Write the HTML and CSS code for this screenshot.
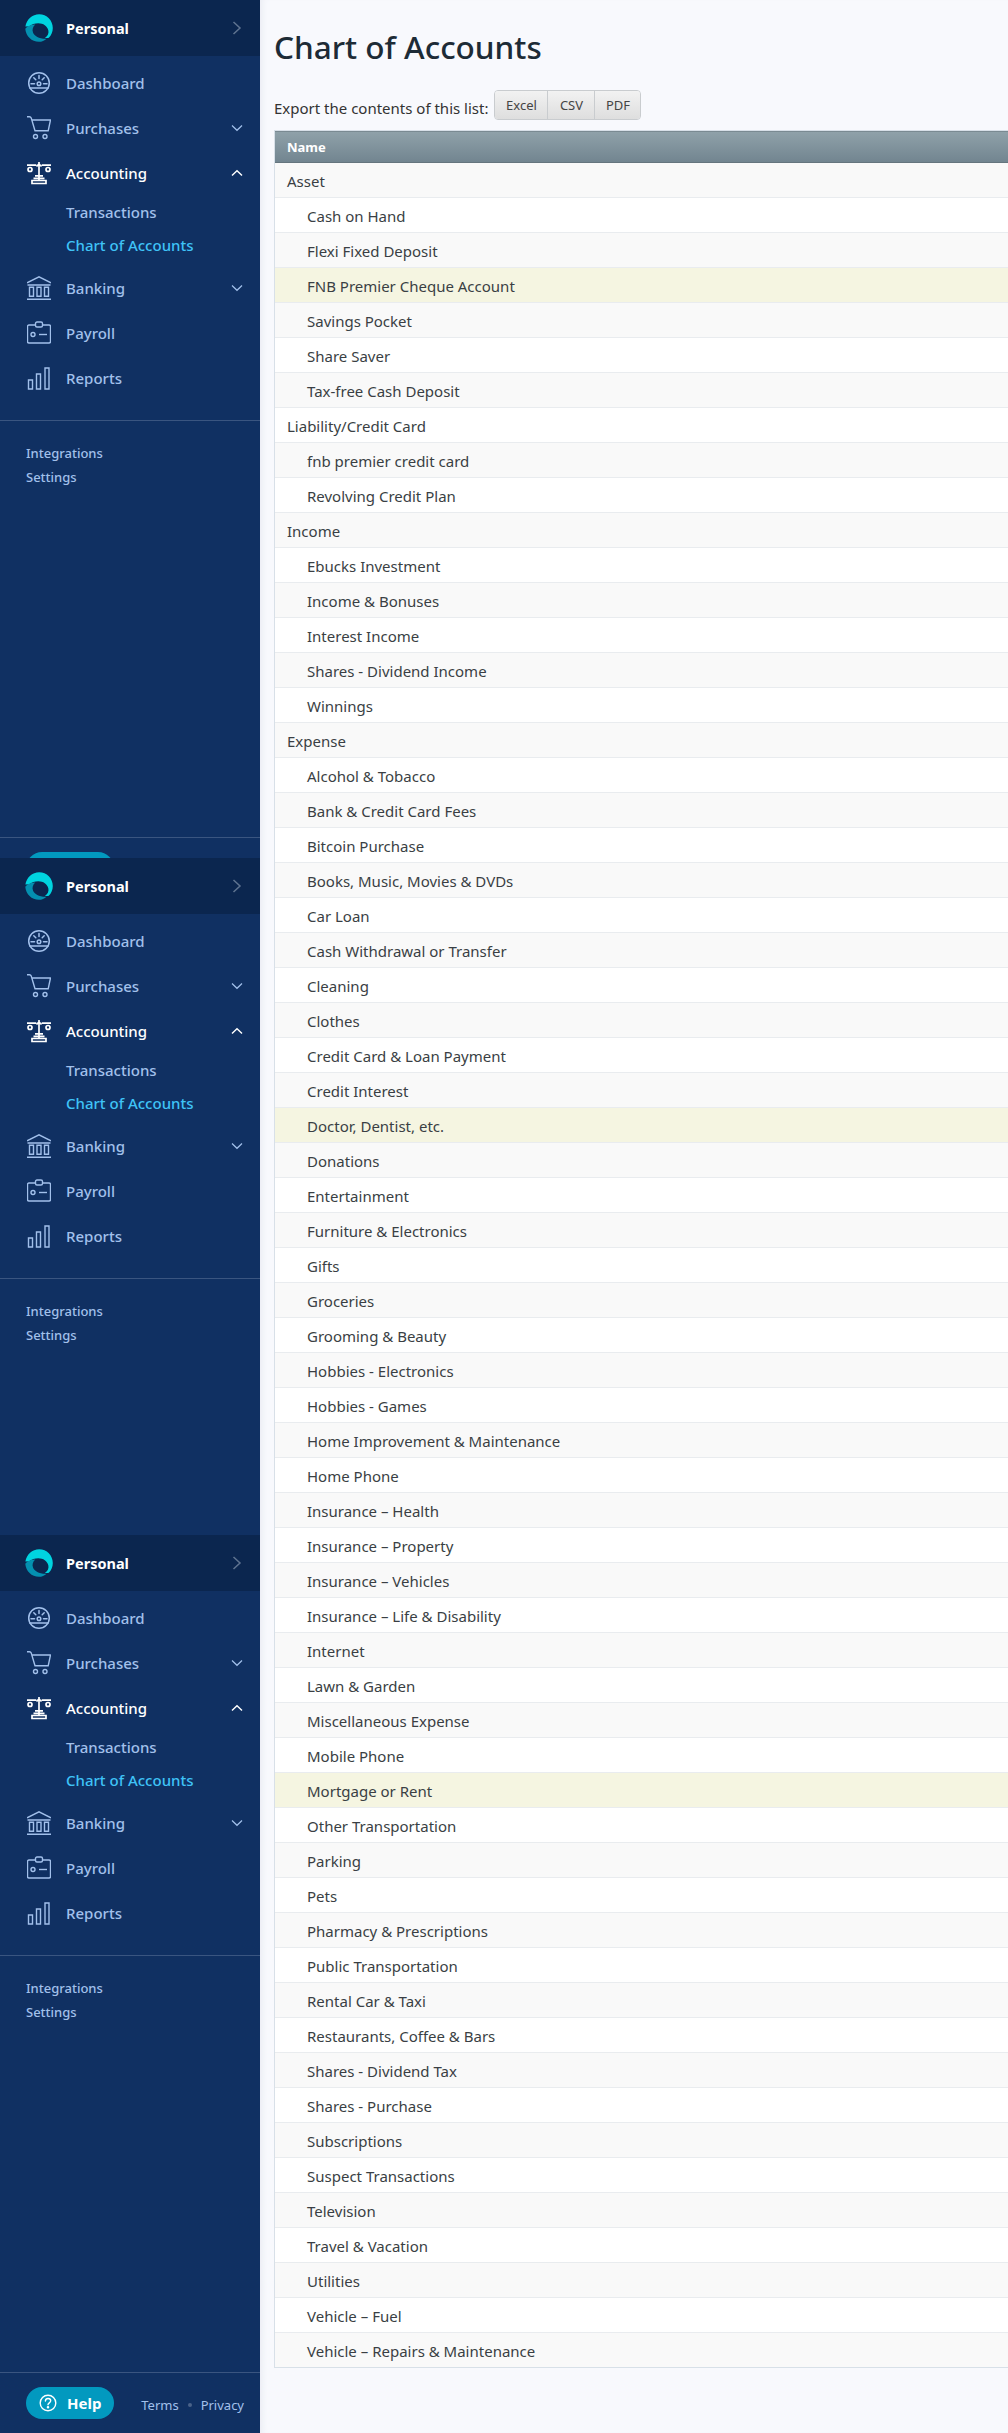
FILE: index.html
```html
<!DOCTYPE html>
<html lang="en">
<head>
<meta charset="utf-8">
<title>Chart of Accounts</title>
<link rel="stylesheet" href="styles.css">
</head>
<body>
<svg class="defs" width="0" height="0" aria-hidden="true">
  <symbol id="i-logo" viewBox="0 0 28 28">
    <path fill="#00d4e0" d="M.4 12.500C1.500 5.500 7.200.2 14.200.2 21.800.2 27.800 6.400 27.800 14c0 3.800-1.400 7.200-4 9.800-1.200.3-2.600.3-3.800-.1 2.900-1.800 4-4.700 3.300-7.500-1-4.200-5-7-10-7-3.500 0-6.800.9-8.900 3z"/>
    <path fill="#0490b0" d="M.3 15C.5 13.800 3.800 10.300 10.300 10.400c-2.600 2.300-3.400 5.400-2.200 8.300 1.500 3.500 6.200 6.300 13.500 6-2.100 1.900-4.800 3.100-7.700 3.100C6.700 27.800.9 22.200.3 15z"/>
  </symbol>
  <symbol id="i-gauge" viewBox="0 0 24 24" fill="none" stroke="currentColor" stroke-width="1.500">
    <circle cx="12" cy="12" r="10.300"/>
    <circle cx="12" cy="12.800" r="1.800"/>
    <path d="M12 4.500v3M6.800 6.800l2 2M17.200 6.800l-2 2M4 12.800h3.500M16.500 12.800H20M2.800 17h18.400" stroke-linecap="round"/>
  </symbol>
  <symbol id="i-cart" viewBox="0 0 24 24" fill="none" stroke="currentColor" stroke-width="1.400">
    <path d="M0 .7h2.500c.8 0 1.400.4 1.700 1.200L8 14.800h13.200L23.500 4H4.800" stroke-linejoin="round"/>
    <circle cx="8.500" cy="20.500" r="2"/>
    <circle cx="18" cy="20.500" r="2"/>
  </symbol>
  <symbol id="i-scale" viewBox="0 0 24 24" fill="none" stroke="currentColor" stroke-width="1.700">
    <path d="M0 4.200h9.300M14.700 4.200H24M12 1v18M9.500 5.500 12 3l2.500 2.500" />
    <circle cx="3" cy="8.500" r="2"/>
    <circle cx="21" cy="8.500" r="2"/>
    <path d="M8 14.800h8M6.500 17.300h11M5 22.500h14v-3H5z"/>
  </symbol>
  <symbol id="i-bank" viewBox="0 0 24 24" fill="none" stroke="currentColor" stroke-width="1.400">
    <path d="M0 6.800 12 .8l12 6M.5 9h23M0 23.200h24"/>
    <path d="M2.500 11.300h4v9h-4zM10 11.300h4v9h-4zM17.500 11.300h4v9h-4z"/>
  </symbol>
  <symbol id="i-card" viewBox="0 0 24 24" fill="none" stroke="currentColor" stroke-width="1.400">
    <path d="M8.500 4H2C1 4 .5 4.500.5 5.500v15C.5 21.500 1 22 2 22h20c1 0 1.500-.5 1.500-1.500v-15C23.500 4.500 23 4 22 4h-6.500"/>
    <rect x="8.500" y="1" width="7" height="5" rx="1.500"/>
    <circle cx="6" cy="13.500" r="2"/>
    <path d="M12 13.500h8"/>
  </symbol>
  <symbol id="i-bars" viewBox="0 0 24 24" fill="none" stroke="currentColor" stroke-width="1.400">
    <path d="M1.500 14h4v9h-4zM9.500 8h4v15h-4zM18 2h4v21h-4z"/>
  </symbol>
  <symbol id="i-help" viewBox="0 0 18 18" fill="none" stroke="currentColor" stroke-width="1.400">
    <circle cx="9" cy="9" r="7.800"/>
    <path d="M6.400 7c.1-1.600 1.300-2.500 2.700-2.500 1.500 0 2.600 1 2.600 2.300 0 2-2.700 2.100-2.700 4" stroke-linecap="round"/>
    <circle cx="9" cy="13.300" r=".6" fill="currentColor"/>
  </symbol>
  <symbol id="i-right" viewBox="0 0 10 14" fill="none" stroke="currentColor" stroke-width="1.500">
    <path d="M1.500 1 8 7l-6.500 6"/>
  </symbol>
  <symbol id="i-down" viewBox="0 0 12 8" fill="none" stroke="currentColor" stroke-width="1.200">
    <path d="M1 1.500 6 6.300l5-4.800"/>
  </symbol>
  <symbol id="i-up" viewBox="0 0 12 8" fill="none" stroke="currentColor" stroke-width="1.400">
    <path d="M1 6.500 6 1.700l5 4.800"/>
  </symbol>
</svg>

<div class="app">
  <aside class="sidebar">
    <div class="panel panel-first">
      <div class="panel-inner">
        <a class="account"><svg class="logo"><use href="#i-logo"/></svg><span class="account-name">Personal</span><svg class="account-arrow"><use href="#i-right"/></svg></a>
        <nav class="nav">
          <a class="nav-item"><svg class="nav-icon"><use href="#i-gauge"/></svg>Dashboard</a>
          <a class="nav-item"><svg class="nav-icon"><use href="#i-cart"/></svg>Purchases<svg class="caret"><use href="#i-down"/></svg></a>
          <a class="nav-item nav-open"><svg class="nav-icon"><use href="#i-scale"/></svg>Accounting<svg class="caret"><use href="#i-up"/></svg></a>
          <div class="subnav"><a class="sub-item">Transactions</a><a class="sub-item sub-active">Chart of Accounts</a></div>
          <a class="nav-item"><svg class="nav-icon"><use href="#i-bank"/></svg>Banking<svg class="caret"><use href="#i-down"/></svg></a>
          <a class="nav-item"><svg class="nav-icon"><use href="#i-card"/></svg>Payroll</a>
          <a class="nav-item"><svg class="nav-icon"><use href="#i-bars"/></svg>Reports</a>
        </nav>
        <div class="extras"><a class="extra">Integrations</a><a class="extra">Settings</a></div>
        <div class="foot"><span class="help"></span></div>
      </div>
    </div>
    <div class="panel panel-second">
      <div class="panel-inner">
        <a class="account"><svg class="logo"><use href="#i-logo"/></svg><span class="account-name">Personal</span><svg class="account-arrow"><use href="#i-right"/></svg></a>
        <nav class="nav">
          <a class="nav-item"><svg class="nav-icon"><use href="#i-gauge"/></svg>Dashboard</a>
          <a class="nav-item"><svg class="nav-icon"><use href="#i-cart"/></svg>Purchases<svg class="caret"><use href="#i-down"/></svg></a>
          <a class="nav-item nav-open"><svg class="nav-icon"><use href="#i-scale"/></svg>Accounting<svg class="caret"><use href="#i-up"/></svg></a>
          <div class="subnav"><a class="sub-item">Transactions</a><a class="sub-item sub-active">Chart of Accounts</a></div>
          <a class="nav-item"><svg class="nav-icon"><use href="#i-bank"/></svg>Banking<svg class="caret"><use href="#i-down"/></svg></a>
          <a class="nav-item"><svg class="nav-icon"><use href="#i-card"/></svg>Payroll</a>
          <a class="nav-item"><svg class="nav-icon"><use href="#i-bars"/></svg>Reports</a>
        </nav>
        <div class="extras"><a class="extra">Integrations</a><a class="extra">Settings</a></div>
      </div>
    </div>
    <div class="panel panel-third">
      <div class="panel-inner">
        <a class="account"><svg class="logo"><use href="#i-logo"/></svg><span class="account-name">Personal</span><svg class="account-arrow"><use href="#i-right"/></svg></a>
        <nav class="nav">
          <a class="nav-item"><svg class="nav-icon"><use href="#i-gauge"/></svg>Dashboard</a>
          <a class="nav-item"><svg class="nav-icon"><use href="#i-cart"/></svg>Purchases<svg class="caret"><use href="#i-down"/></svg></a>
          <a class="nav-item nav-open"><svg class="nav-icon"><use href="#i-scale"/></svg>Accounting<svg class="caret"><use href="#i-up"/></svg></a>
          <div class="subnav"><a class="sub-item">Transactions</a><a class="sub-item sub-active">Chart of Accounts</a></div>
          <a class="nav-item"><svg class="nav-icon"><use href="#i-bank"/></svg>Banking<svg class="caret"><use href="#i-down"/></svg></a>
          <a class="nav-item"><svg class="nav-icon"><use href="#i-card"/></svg>Payroll</a>
          <a class="nav-item"><svg class="nav-icon"><use href="#i-bars"/></svg>Reports</a>
        </nav>
        <div class="extras"><a class="extra">Integrations</a><a class="extra">Settings</a></div>
        <div class="foot"><a class="help"><svg class="help-icon"><use href="#i-help"/></svg>Help</a><div class="legal"><a>Terms</a><i class="dot"></i><a>Privacy</a></div></div>
      </div>
    </div>
  </aside>

  <main class="main">
    <h1 class="title">Chart of Accounts</h1>
    <div class="export">
      <span class="export-label">Export the contents of this list:</span>
      <div class="btn-group"><button class="btn">Excel</button><button class="btn">CSV</button><button class="btn">PDF</button></div>
    </div>
    <table class="accounts">
      <thead><tr><th>Name</th></tr></thead>
      <tbody>
        <tr><td>Asset</td></tr>
        <tr><td class="child">Cash on Hand</td></tr>
        <tr><td class="child">Flexi Fixed Deposit</td></tr>
        <tr class="mark"><td class="child">FNB Premier Cheque Account</td></tr>
        <tr><td class="child">Savings Pocket</td></tr>
        <tr><td class="child">Share Saver</td></tr>
        <tr><td class="child">Tax-free Cash Deposit</td></tr>
        <tr><td>Liability/Credit Card</td></tr>
        <tr><td class="child">fnb premier credit card</td></tr>
        <tr><td class="child">Revolving Credit Plan</td></tr>
        <tr><td>Income</td></tr>
        <tr><td class="child">Ebucks Investment</td></tr>
        <tr><td class="child">Income &amp; Bonuses</td></tr>
        <tr><td class="child">Interest Income</td></tr>
        <tr><td class="child">Shares - Dividend Income</td></tr>
        <tr><td class="child">Winnings</td></tr>
        <tr><td>Expense</td></tr>
        <tr><td class="child">Alcohol &amp; Tobacco</td></tr>
        <tr><td class="child">Bank &amp; Credit Card Fees</td></tr>
        <tr><td class="child">Bitcoin Purchase</td></tr>
        <tr><td class="child">Books, Music, Movies &amp; DVDs</td></tr>
        <tr><td class="child">Car Loan</td></tr>
        <tr><td class="child">Cash Withdrawal or Transfer</td></tr>
        <tr><td class="child">Cleaning</td></tr>
        <tr><td class="child">Clothes</td></tr>
        <tr><td class="child">Credit Card &amp; Loan Payment</td></tr>
        <tr><td class="child">Credit Interest</td></tr>
        <tr class="mark"><td class="child">Doctor, Dentist, etc.</td></tr>
        <tr><td class="child">Donations</td></tr>
        <tr><td class="child">Entertainment</td></tr>
        <tr><td class="child">Furniture &amp; Electronics</td></tr>
        <tr><td class="child">Gifts</td></tr>
        <tr><td class="child">Groceries</td></tr>
        <tr><td class="child">Grooming &amp; Beauty</td></tr>
        <tr><td class="child">Hobbies - Electronics</td></tr>
        <tr><td class="child">Hobbies - Games</td></tr>
        <tr><td class="child">Home Improvement &amp; Maintenance</td></tr>
        <tr><td class="child">Home Phone</td></tr>
        <tr><td class="child">Insurance – Health</td></tr>
        <tr><td class="child">Insurance – Property</td></tr>
        <tr><td class="child">Insurance – Vehicles</td></tr>
        <tr><td class="child">Insurance – Life &amp; Disability</td></tr>
        <tr><td class="child">Internet</td></tr>
        <tr><td class="child">Lawn &amp; Garden</td></tr>
        <tr><td class="child">Miscellaneous Expense</td></tr>
        <tr><td class="child">Mobile Phone</td></tr>
        <tr class="mark"><td class="child">Mortgage or Rent</td></tr>
        <tr><td class="child">Other Transportation</td></tr>
        <tr><td class="child">Parking</td></tr>
        <tr><td class="child">Pets</td></tr>
        <tr><td class="child">Pharmacy &amp; Prescriptions</td></tr>
        <tr><td class="child">Public Transportation</td></tr>
        <tr><td class="child">Rental Car &amp; Taxi</td></tr>
        <tr><td class="child">Restaurants, Coffee &amp; Bars</td></tr>
        <tr><td class="child">Shares - Dividend Tax</td></tr>
        <tr><td class="child">Shares - Purchase</td></tr>
        <tr><td class="child">Subscriptions</td></tr>
        <tr><td class="child">Suspect Transactions</td></tr>
        <tr><td class="child">Television</td></tr>
        <tr><td class="child">Travel &amp; Vacation</td></tr>
        <tr><td class="child">Utilities</td></tr>
        <tr><td class="child">Vehicle – Fuel</td></tr>
        <tr><td class="child">Vehicle – Repairs &amp; Maintenance</td></tr>
      </tbody>
    </table>
  </main>
</div>
</body>
</html>
```
FILE: styles.css
```css
* { box-sizing: border-box; }
html, body { margin: 0; height: 2433px; overflow: hidden; }
body { font-family: "Noto Sans", "Open Sans", sans-serif; background: #f8f9fd; color: #333; }
a { text-decoration: none; color: inherit; }
.defs { display: block; height: 0; }

.app { display: flex; height: 2433px; width: 1008px; overflow: hidden; }

.sidebar { width: 260px; flex: none; background: #103062; display: flex; flex-direction: column; }
.panel { overflow: hidden; flex: none; }
.panel-first { height: 858px; }
.panel-second { height: 677px; }
.panel-third { height: 898px; }
.panel-inner { height: 898px; display: flex; flex-direction: column; }

.account { height: 56px; flex: none; display: flex; align-items: center; background: #0b264f; padding-left: 25px; }
.logo { width: 28px; height: 28px; flex: none; }
.account-name { margin-left: 13px; font-size: 14.500px; font-weight: 700; color: #fff; flex: 1; }
.account-arrow { width: 10px; height: 14px; margin-right: 18px; color: #5f7390; }

.nav { padding-top: 4px; display: flex; flex-direction: column; }
.nav-item { height: 45px; display: flex; align-items: center; padding-left: 27px; padding-right: 17px; font-size: 15px; font-weight: 500; color: #a2c0eb; }
.nav-open { color: #fff; }
.nav-icon { width: 24px; height: 24px; margin-right: 15px; flex: none; }
.caret { width: 12px; height: 8px; margin-left: auto; }
.subnav { display: flex; flex-direction: column; margin-bottom: 4px; }
.sub-item { height: 33px; display: flex; align-items: center; padding-left: 66px; font-size: 15px; font-weight: 500; color: #a2c0eb; }
.sub-active { color: #3fc3f7; }

.extras { margin-top: 20px; border-top: 1px solid #3a5580; padding: 20px 0 0 26px; display: flex; flex-direction: column; }
.extra { height: 24px; display: flex; align-items: center; font-size: 13px; font-weight: 500; color: #a2c0eb; }

.foot { margin-top: auto; border-top: 1px solid #3a5580; height: 61px; display: flex; align-items: flex-start; padding: 14px 16px 0 26px; justify-content: space-between; }
.help { width: 88px; height: 32px; border-radius: 16px; background: #0299bf; color: #fff; display: flex; align-items: center; font-size: 15px; font-weight: 700; padding-left: 13px; }
.help-icon { width: 18px; height: 18px; margin-right: 10px; }
.legal { display: flex; align-items: center; height: 36px; font-size: 13px; color: #a2c0eb; }
.dot { width: 4px; height: 4px; border-radius: 50%; background: #4a6288; margin: 0 9px; }

.main { flex: 1; min-width: 0; padding: 0 0 0 14px; background: #f8f9fd; box-shadow: inset 6px 0 6px -4px #e9ebf2; overflow: hidden; }
.title { margin: 26px 0 0; font-size: 31.500px; line-height: 42px; font-weight: 500; color: #1d2b36; }
.export { margin-top: 22px; height: 30px; display: flex; align-items: flex-start; font-size: 15px; color: #333; }
.export-label { margin-right: 6px; margin-top: 8px; line-height: 20px; }
.btn-group { display: flex; border: 1px solid #c9cccf; border-radius: 4px; overflow: hidden; height: 30px; }
.btn { font: inherit; font-size: 13px; padding: 0; height: 28px; border: 0; border-right: 1px solid #c9cccf; color: #444; background: linear-gradient(#f2f2f2, #dedede); display: flex; align-items: center; justify-content: center; width: 53px; }
.btn:nth-child(2) { width: 47px; }
.btn:last-child { border-right: 0; width: 45px; }

.accounts { width: 1000px; border-collapse: separate; border-spacing: 0; margin-top: 10px; border: 1px solid #d8e0e8; border-right: 0; background: #fff; font-size: 15px; table-layout: fixed; }
.accounts th { height: 32px; padding: 0 12px; text-align: left; font-size: 13px; font-weight: 700; color: #fff; background: linear-gradient(#8fa1a9, #728590); border-top: 1px solid #7a8a92; border-bottom: 1px solid #65757e; }
.accounts td { height: 35px; padding: 1px 12px 0; border-bottom: 1px solid #e9ecef; color: #3a3f44; }
.accounts tbody tr:last-child td { border-bottom: 0; height: 34px; }
.accounts tbody tr:nth-child(odd) { background: #f9f9f9; }
.accounts tbody tr.mark { background: #f5f5e1; }
.accounts td.child { padding-left: 32px; }
```
